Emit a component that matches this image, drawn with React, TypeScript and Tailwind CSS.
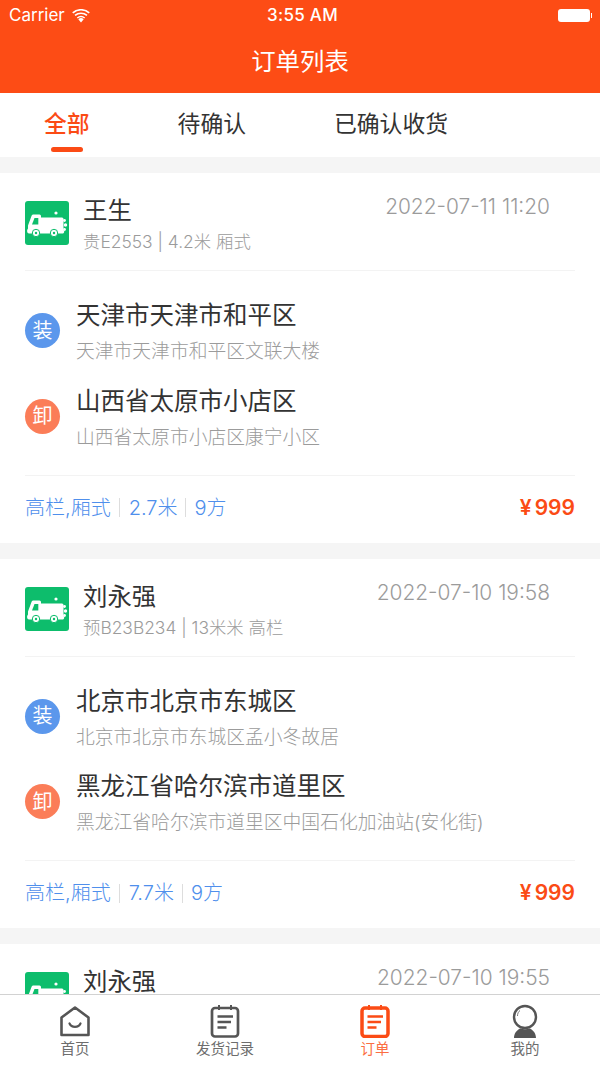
import React from "react";

const FONT = "font-['Inter','Noto_Sans_CJK_SC',sans-serif]";

const orders = [
  {
    name: "王生",
    time: "2022-07-11 11:20",
    plate: "贵E2553",
    spec: "4.2米 厢式",
    from: "天津市天津市和平区",
    fromDetail: "天津市天津市和平区文联大楼",
    to: "山西省太原市小店区",
    toDetail: "山西省太原市小店区康宁小区",
    length: "2.7米",
  },
  {
    name: "刘永强",
    time: "2022-07-10 19:58",
    plate: "预B23B234",
    spec: "13米米 高栏",
    from: "北京市北京市东城区",
    fromDetail: "北京市北京市东城区孟小冬故居",
    to: "黑龙江省哈尔滨市道里区",
    toDetail: "黑龙江省哈尔滨市道里区中国石化加油站(安化街)",
    length: "7.7米",
  },
  {
    name: "刘永强",
    time: "2022-07-10 19:55",
    plate: "",
    spec: "",
    from: "",
    fromDetail: "",
    to: "",
    toDetail: "",
    length: "",
  },
];

const TruckLogo = () => (
  <div className="h-[44px] w-[44px] shrink-0 rounded-[3px] bg-[#0dbd6c]">
    <svg viewBox="0 0 44 44" className="h-[44px] w-[44px]" fill="none">
      <path d="M8 13.500h6.500a1.500 1.500 0 0 1 1.500 1.500v1.500h21a1.500 1.500 0 0 1 1.500 1.500v11c1.500 1.500 .5 3.500-1 3.500H4c-2 0-2.500-3.500-1-5v-3l3.500-9.500a2 2 0 0 1 1.500-1.500z" fill="#fff" />
      <path d="M7 23.500l2.500-6.500h3.800v6.500z" fill="#0dbd6c" />
      <circle cx="31" cy="12" r="1.600" fill="#fff" />
      <circle cx="39.500" cy="19.500" r="1.400" fill="#fff" />
      <circle cx="40.500" cy="24" r="1.700" fill="#fff" />
      <circle cx="39.500" cy="28.500" r="1.400" fill="#fff" />
      <circle cx="11" cy="32" r="3.700" fill="#fff" stroke="#0dbd6c" strokeWidth="1" />
      <circle cx="11" cy="32" r="1.200" fill="#0dbd6c" />
      <circle cx="29" cy="32" r="3.700" fill="#fff" stroke="#0dbd6c" strokeWidth="1" />
      <circle cx="29" cy="32" r="1.200" fill="#0dbd6c" />
    </svg>
  </div>
);

const Stop = ({ kind, title, detail }: { kind: "装" | "卸"; title: string; detail: string }) => (
  <div className="flex items-center">
    <div
      className={`mb-[3px] flex h-[35px] w-[35px] shrink-0 items-center justify-center rounded-full text-[20px] leading-none text-white ${
        kind === "装" ? "bg-[#5b97ec]" : "bg-[#fb7d58]"
      }`}
    >
      {kind}
    </div>
    <div className="ml-[16px] min-w-0">
      <div className="h-[34px] whitespace-nowrap text-[24.5px] leading-[34px] text-[#333]">{title}</div>
      <div className="mt-[6px] h-[28px] whitespace-nowrap text-[18.8px] font-light leading-[28px] text-[#9b9b9b]">
        {detail}
      </div>
    </div>
  </div>
);

const OrderCard = ({ order }: { order: (typeof orders)[number] }) => (
  <section className="mb-[16px] bg-white px-[25px]">
    <div className="flex h-[98px] border-b border-[#f3f3f3] pt-[28px]">
      <TruckLogo />
      <div className="ml-[14px] flex-1">
        <div className="-mt-[8px] h-[34px] text-[24.4px] leading-[34px] text-[#333]">{order.name}</div>
        <div className="mt-[2px] h-[26px] whitespace-nowrap text-[17.4px] font-light leading-[26px] text-[#9b9b9b]">
          {order.plate} | {order.spec}
        </div>
      </div>
      <div className="-mt-[9px] mr-[25px] h-[30px] text-[20.9px] font-light leading-[30px] text-[#9b9b9b]">
        {order.time}
      </div>
    </div>
    <div className="flex h-[204.5px] flex-col gap-[17.5px] border-b border-[#f3f3f3] pt-[27px]">
      <Stop kind="装" title={order.from} detail={order.fromDetail} />
      <Stop kind="卸" title={order.to} detail={order.toDetail} />
    </div>
    <div className="flex h-[67px] items-center justify-between pb-[3px]">
      <div className="flex items-center text-[20px] font-light text-[#4f8fec]">
        <span>高栏,厢式</span>
        <span className="ml-[8px] mr-[9px] h-[19px] w-px bg-[#ddd]" />
        <span>{order.length}</span>
        <span className="mx-[8px] h-[19px] w-px bg-[#ddd]" />
        <span>9方</span>
      </div>
      <div className="text-[21px] font-semibold text-[#fb4b15]">
        <span className="mr-[3px]">¥</span>999
      </div>
    </div>
  </section>
);

const TabItem = ({ label, active, children }: { label: string; active?: boolean; children: React.ReactNode }) => (
  <div className="flex flex-1 flex-col items-center pt-[9px]">
    <div className="h-[34px] w-[34px]">{children}</div>
    <span className={`mt-[1px] text-[14.5px] leading-[20px] ${active ? "text-[#fb6e43]" : "text-[#6d6d6d]"}`}>{label}</span>
  </div>
);

const NoteIcon = ({ color, weight }: { color: string; weight: number }) => (
  <svg viewBox="0 0 34 34" className="h-[34px] w-[34px]" fill="none">
    <rect x="4" y="4" width="26" height="28.500" rx="3" stroke={color} strokeWidth={weight} />
    <path d="M11 1v5M23 1v5" stroke={color} strokeWidth="2" />
    <path d="M9.500 12.500H25M9.500 18H23M9.500 23.500H18.500" stroke={color} strokeWidth="2.400" />
  </svg>
);

export default function App() {
  return (
    <div className={`flex h-[1067px] w-[600px] flex-col overflow-hidden bg-[#f5f5f5] ${FONT}`}>
      <header className="h-[93px] shrink-0 bg-[#fd4c15] text-white">
        <div className="flex h-[31px] items-center justify-between pl-[9px] pr-[8px]">
          <div className="flex items-center gap-[7px] text-[17px]">
            <span>Carrier</span>
            <svg viewBox="0 0 18 14" className="h-[14px] w-[18px]" fill="#fff">
              <path d="M9 13.500l-2.700-3.200a4 4 0 0 1 5.400 0z" />
              <path d="M4.800 8.500a6.500 6.500 0 0 1 8.400 0l-1 1.100a5 5 0 0 0-6.400 0z" />
              <path d="M2.500 5.800a10 10 0 0 1 13 0l-1.100 1.200a8.300 8.300 0 0 0-10.800 0z" />
              <path d="M.2 3.200a13.500 13.500 0 0 1 17.600 0l-1.100 1.200a11.800 11.800 0 0 0-15.400 0z" />
            </svg>
          </div>
          <div className="absolute left-[267px] text-[17px] font-medium tracking-[0.3px]">3:55 AM</div>
          <div className="flex items-center">
            <div className="h-[13px] w-[32px] rounded-[3px] bg-white" />
            <div className="ml-px h-[5px] w-px bg-white" />
          </div>
        </div>
        <h1 className="pt-[13px] text-center text-[24.4px] font-normal leading-[34px]">订单列表</h1>
      </header>

      <nav className="flex h-[64px] shrink-0 bg-white text-[22.8px] leading-[32px] text-[#333]">
        <div className="relative ml-[44px] pt-[15px] font-medium text-[#fb4b15]">
          全部
          <div className="absolute bottom-[5px] left-[7px] h-[5px] w-[32px] rounded-full bg-[#fb4b15]" />
        </div>
        <div className="ml-[88px] pt-[15px]">待确认</div>
        <div className="ml-[88px] pt-[15px]">已确认收货</div>
      </nav>

      <main className="min-h-0 flex-1 overflow-hidden pt-[16px]">
        {orders.map((order, i) => (
          <OrderCard key={i} order={order} />
        ))}
      </main>

      <footer className="flex h-[73px] shrink-0 border-t border-[#d2d2d2] bg-white">
        <TabItem label="首页">
          <svg viewBox="0 0 34 34" className="h-[34px] w-[34px]" fill="none">
            <path d="M3.500 13.500L17 3.500l13.500 10V31h-27z" stroke="#555" strokeWidth="2.600" strokeLinejoin="round" />
            <path d="M11.500 19.500c2 4.500 9 4.500 11 0" stroke="#555" strokeWidth="2.200" strokeLinecap="round" />
          </svg>
        </TabItem>
        <TabItem label="发货记录">
          <NoteIcon color="#555" weight={2.7} />
        </TabItem>
        <TabItem label="订单" active>
          <NoteIcon color="#fb4b15" weight={3.5} />
        </TabItem>
        <TabItem label="我的">
          <svg viewBox="0 0 34 34" className="h-[34px] w-[34px]" fill="none">
            <circle cx="17" cy="13" r="11" stroke="#555" strokeWidth="2.400" />
            <path d="M9.500 12c0-2.500 1-4.500 2.500-5.500" stroke="#777" strokeWidth="1" />
            <path d="M12 24.500c3.500 1 6.500 1 10 0c3.500 2 6 5 6 9.500H6c0-4.500 2.500-7.500 6-9.500z" fill="#555" />
          </svg>
        </TabItem>
      </footer>
    </div>
  );
}
